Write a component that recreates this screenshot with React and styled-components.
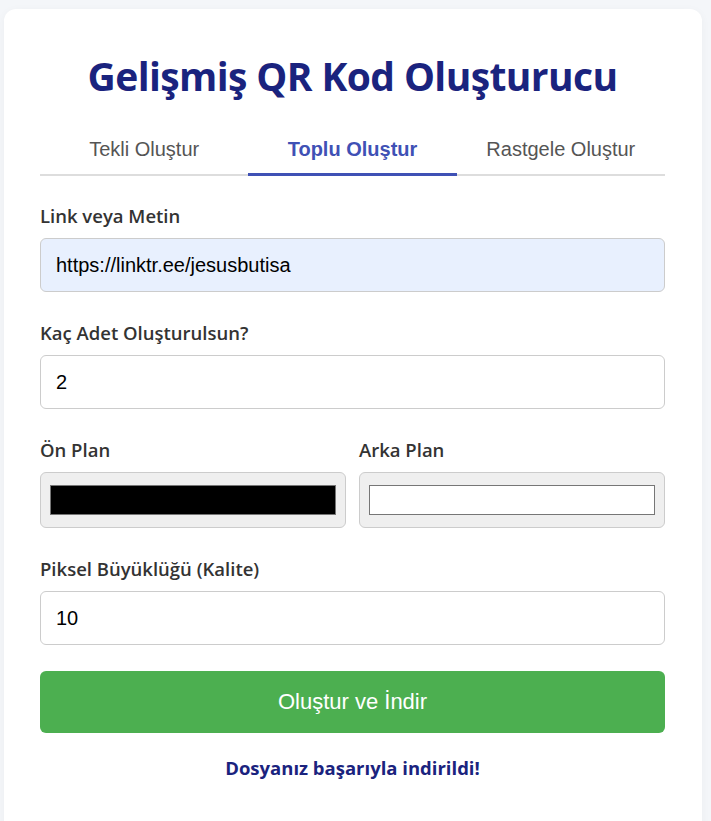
import React, { useState } from "react";
import styled, { createGlobalStyle } from "styled-components";

const Global = createGlobalStyle`
  html, body { margin: 0; padding: 0; background: #f4f6f9; }
  body { font-family: "Open Sans", "Noto Sans", sans-serif; }
  * { box-sizing: border-box; }
`;

const Card = styled.div`
  width: 698px;
  margin: 9px auto 0 4px;
  background: #ffffff;
  border-radius: 12px;
  padding: 43px 37px 60px 36px;
  min-height: 830px;
  box-shadow: 0 2px 10px rgba(0, 0, 0, 0.04);
`;

const Title = styled.h1`
  margin: 0 0 26px;
  text-align: center;
  color: #1a237e;
  font-family: "Open Sans", sans-serif;
  font-weight: 700;
  font-size: 39px;
  line-height: 48px;
  letter-spacing: -0.6px;
`;

const Tabs = styled.div`
  display: grid;
  grid-template-columns: repeat(3, 1fr);
  border-bottom: 2px solid #dddddd;
  margin-bottom: 28px;
`;

const Tab = styled.button`
  background: none;
  border: none;
  border-bottom: 3px solid ${(p) => (p.$active ? "#3f51b5" : "transparent")};
  margin-bottom: -2px;
  padding: 12px 0 12px;
  font-family: "Liberation Sans", Arial, sans-serif;
  font-size: 20px;
  line-height: 23px;
  font-weight: ${(p) => (p.$active ? 700 : 400)};
  color: ${(p) => (p.$active ? "#3f51b5" : "#555555")};
  cursor: pointer;
`;

const Group = styled.div`
  margin-bottom: ${(p) => (p.$last ? "0" : "29px")};
`;

const Row = styled.div`
  display: grid;
  grid-template-columns: 1fr 1fr;
  gap: 13px;
  margin-bottom: 29px;
`;

const Label = styled.label`
  display: block;
  font-family: "Open Sans", sans-serif;
  font-weight: 600;
  font-size: 18.5px;
  line-height: 24px;
  color: #333333;
  margin-bottom: 10px;
`;

const TextInput = styled.input`
  display: block;
  width: 100%;
  height: 54px;
  padding: 0 15px;
  border: 1px solid #cccccc;
  border-radius: 6px;
  font-family: "Liberation Sans", Arial, sans-serif;
  font-size: 20px;
  color: #000000;
  background: ${(p) => (p.$filled ? "#e8f0fe" : "#ffffff")};
  outline: none;
`;

const ColorInput = styled.input`
  display: block;
  width: 100%;
  height: 56px;
  padding: 12px 9px;
  border: 1px solid #cccccc;
  border-radius: 6px;
  background: #efefef;
  cursor: pointer;
  -webkit-appearance: none;
  appearance: none;
  &::-webkit-color-swatch-wrapper { padding: 0; }
  &::-webkit-color-swatch { border: 1px solid #767676; border-radius: 0; }
`;

const Submit = styled.button`
  display: block;
  width: 100%;
  height: 62px;
  margin-top: 26px;
  border: none;
  border-radius: 6px;
  background: #4caf50;
  color: #ffffff;
  font-family: "Liberation Sans", Arial, sans-serif;
  font-size: 22px;
  cursor: pointer;
`;

const Message = styled.p`
  margin: 22px 0 0;
  text-align: center;
  color: #1a237e;
  font-family: "Open Sans", sans-serif;
  font-weight: 700;
  font-size: 18.5px;
  line-height: 25px;
`;

export default function App() {
  const [tab, setTab] = useState(1);
  const tabs = ["Tekli Oluştur", "Toplu Oluştur", "Rastgele Oluştur"];
  return (
    <>
      <Global />
      <Card>
        <Title>Gelişmiş QR Kod Oluşturucu</Title>
        <Tabs>
          {tabs.map((t, i) => (
            <Tab key={t} $active={i === tab} onClick={() => setTab(i)}>
              {t}
            </Tab>
          ))}
        </Tabs>
        <Group>
          <Label>Link veya Metin</Label>
          <TextInput $filled defaultValue="https://linktr.ee/jesusbutisa" />
        </Group>
        <Group>
          <Label>Kaç Adet Oluşturulsun?</Label>
          <TextInput type="number" defaultValue="2" />
        </Group>
        <Row>
          <div>
            <Label>Ön Plan</Label>
            <ColorInput type="color" defaultValue="#000000" />
          </div>
          <div>
            <Label>Arka Plan</Label>
            <ColorInput type="color" defaultValue="#ffffff" />
          </div>
        </Row>
        <Group $last>
          <Label>Piksel Büyüklüğü (Kalite)</Label>
          <TextInput type="number" defaultValue="10" />
        </Group>
        <Submit>Oluştur ve İndir</Submit>
        <Message>Dosyanız başarıyla indirildi!</Message>
      </Card>
    </>
  );
}
